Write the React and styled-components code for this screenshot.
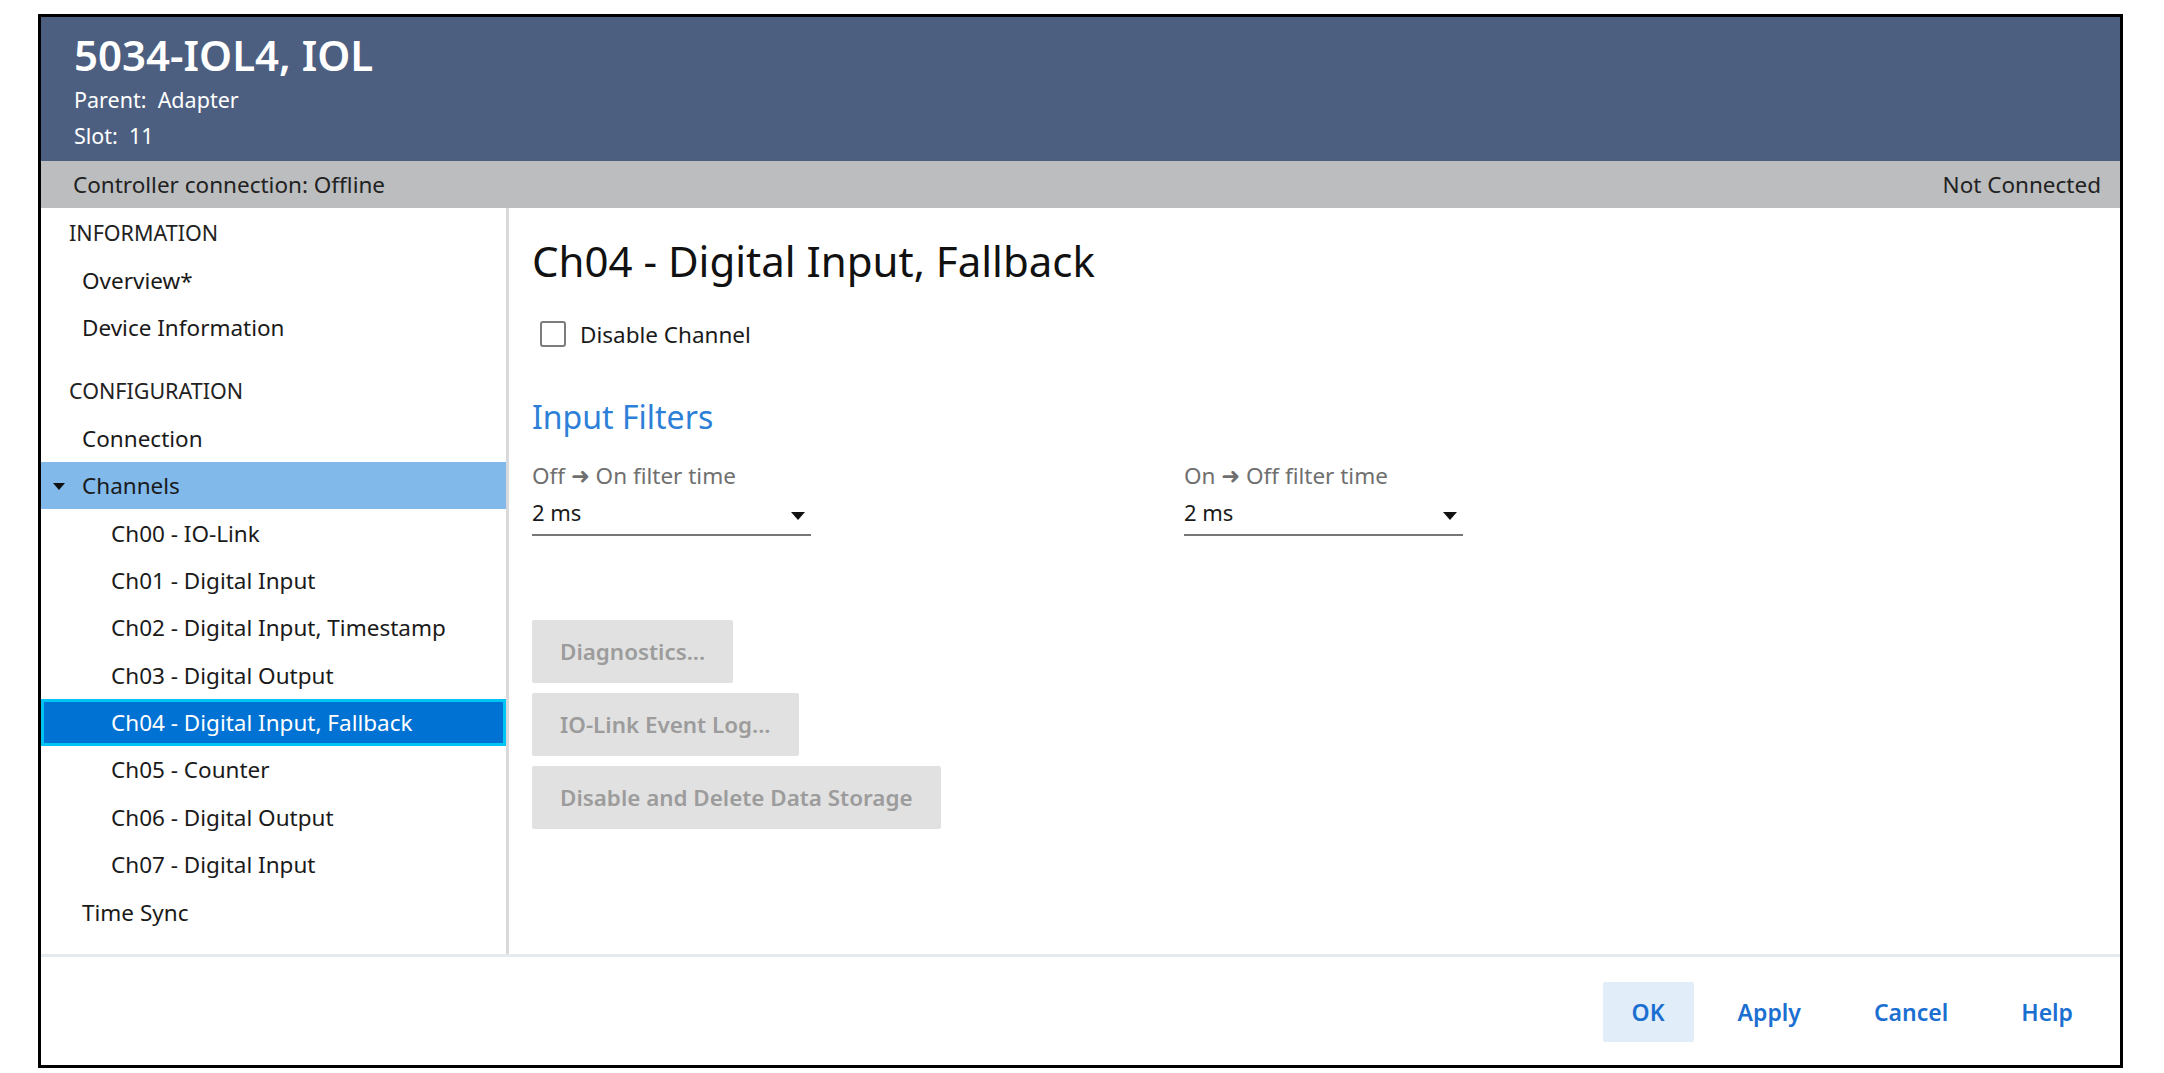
import React from "react";
import styled, { createGlobalStyle } from "styled-components";

const GlobalStyle = createGlobalStyle`
  html, body {
    margin: 0;
    padding: 0;
    background: #ffffff;
  }
  body {
    font-family: "Noto Sans", "DejaVu Sans", sans-serif;
    color: #1c1c1c;
  }
`;

const Page = styled.div`
  padding: 14px 41px 5px 38px;
`;

const Frame = styled.div`
  border: 3px solid #000;
  height: 1048px;
  display: flex;
  flex-direction: column;
`;

const Header = styled.div`
  background: #4d5f80;
  color: #fff;
  padding: 16px 33px 12px;
  height: 144px;
  box-sizing: border-box;
`;

const DeviceTitle = styled.h1`
  margin: 0;
  font-size: 42px;
  line-height: 44px;
  font-weight: 600;
`;

const HeaderLine = styled.div`
  font-size: 21.5px;
  line-height: 26px;
  margin-top: 10px;
`;

const StatusBar = styled.div`
  background: #bcbdbf;
  height: 47px;
  flex: none;
  display: flex;
  align-items: center;
  justify-content: space-between;
  padding: 0 19px 0 32px;
  font-size: 22.5px;
  color: #222;
`;

const Body = styled.div`
  flex: 1;
  display: flex;
  border-bottom: 3px solid #e6e9ee;
  min-height: 0;
`;

const Sidebar = styled.nav`
  width: 465px;
  border-right: 3px solid #d9d9dc;
  padding-top: 1px;
`;

const SectionHead = styled.div`
  height: 47.4px;
  display: flex;
  align-items: center;
  padding-left: 28px;
  font-size: 21.5px;
  color: #222;
  margin-top: ${(p) => (p.$gap ? "16px" : "0")};
`;

const NavItem = styled.div`
  height: 47.4px;
  box-sizing: border-box;
  display: flex;
  align-items: center;
  padding-left: ${(p) =>
    (p.$level === 2 ? 70 : 41) - (p.$selected ? 3 : 0)}px;
  font-size: 22.5px;
  color: ${(p) => (p.$selected ? "#fff" : "#1a1a1a")};
  background: ${(p) =>
    p.$selected ? "#0072d3" : p.$open ? "#80b9ea" : "transparent"};
  border: ${(p) => (p.$selected ? "3px solid #00c4f4" : "none")};
  position: relative;
`;

const Caret = styled.span`
  position: absolute;
  left: 12px;
  top: 50%;
  margin-top: -3px;
  width: 0;
  height: 0;
  border-left: 6px solid transparent;
  border-right: 6px solid transparent;
  border-top: 7px solid #111;
`;

const Main = styled.main`
  flex: 1;
  padding: 31px 0 0 23px;
`;

const PageTitle = styled.h2`
  margin: 0;
  font-size: 42px;
  line-height: 44px;
  font-weight: 400;
  color: #111;
`;

const CheckRow = styled.label`
  display: flex;
  align-items: center;
  gap: 14px;
  height: 30px;
  margin-top: 36px;
  padding-left: 8px;
  font-size: 22.5px;
  color: #1a1a1a;
`;

const Box = styled.span`
  width: 26px;
  height: 26px;
  border: 2px solid #7c7c7c;
  border-radius: 3px;
  box-sizing: border-box;
`;

const GroupTitle = styled.h3`
  margin: 50px 0 0;
  font-size: 32px;
  line-height: 36px;
  font-weight: 400;
  color: #2d7fd8;
`;

const FilterRow = styled.div`
  display: flex;
  gap: 373px;
  margin-top: 28px;
`;

const Field = styled.div`
  width: 279px;
`;

const FieldLabel = styled.div`
  font-size: 22.5px;
  line-height: 26px;
  color: #6f6f6f;
`;

const Select = styled.div`
  margin-top: 10px;
  display: flex;
  align-items: center;
  justify-content: space-between;
  padding: 0 6px 9px 0;
  border-bottom: 2px solid #777;
  font-size: 22px;
  line-height: 26px;
  color: #1a1a1a;
`;

const DropArrow = styled.span`
  width: 0;
  height: 0;
  margin-top: 8px;
  border-left: 7px solid transparent;
  border-right: 7px solid transparent;
  border-top: 8px solid #111;
`;

const ActionList = styled.div`
  display: flex;
  flex-direction: column;
  align-items: flex-start;
  gap: 10px;
  margin-top: 84px;
`;

const ActionButton = styled.button`
  height: 63px;
  padding: 0 28px;
  border: none;
  border-radius: 2px;
  background: #e1e1e1;
  color: #9c9c9c;
  font-family: inherit;
  font-size: 22.4px;
  font-weight: 600;
`;

const Footer = styled.div`
  height: 108px;
  flex: none;
  display: flex;
  justify-content: flex-end;
  align-items: center;
  gap: 15px;
  padding: 2px 18px 0 0;
  box-sizing: border-box;
`;

const FooterButton = styled.button`
  height: 60px;
  padding: 0 29px;
  border: none;
  border-radius: 2px;
  background: ${(p) => (p.$primary ? "#e1edf9" : "transparent")};
  color: #1b6fd1;
  font-family: inherit;
  font-size: 23px;
  font-weight: 600;
`;

const channels = [
  "Ch00 - IO-Link",
  "Ch01 - Digital Input",
  "Ch02 - Digital Input, Timestamp",
  "Ch03 - Digital Output",
  "Ch04 - Digital Input, Fallback",
  "Ch05 - Counter",
  "Ch06 - Digital Output",
  "Ch07 - Digital Input",
];

export default function App() {
  return (
    <Page>
      <GlobalStyle />
      <Frame>
        <Header>
          <DeviceTitle>5034-IOL4, IOL</DeviceTitle>
          <HeaderLine>Parent:&nbsp; Adapter</HeaderLine>
          <HeaderLine>Slot:&nbsp; 11</HeaderLine>
        </Header>
        <StatusBar>
          <span>Controller connection: Offline</span>
          <span>Not Connected</span>
        </StatusBar>
        <Body>
          <Sidebar>
            <SectionHead>INFORMATION</SectionHead>
            <NavItem>Overview*</NavItem>
            <NavItem>Device Information</NavItem>
            <SectionHead $gap>CONFIGURATION</SectionHead>
            <NavItem>Connection</NavItem>
            <NavItem $open>
              <Caret />
              Channels
            </NavItem>
            {channels.map((c) => (
              <NavItem key={c} $level={2} $selected={c.startsWith("Ch04")}>
                {c}
              </NavItem>
            ))}
            <NavItem>Time Sync</NavItem>
          </Sidebar>
          <Main>
            <PageTitle>Ch04 - Digital Input, Fallback</PageTitle>
            <CheckRow>
              <Box />
              Disable Channel
            </CheckRow>
            <GroupTitle>Input Filters</GroupTitle>
            <FilterRow>
              <Field>
                <FieldLabel>Off ➜ On filter time</FieldLabel>
                <Select>
                  <span>2 ms</span>
                  <DropArrow />
                </Select>
              </Field>
              <Field>
                <FieldLabel>On ➜ Off filter time</FieldLabel>
                <Select>
                  <span>2 ms</span>
                  <DropArrow />
                </Select>
              </Field>
            </FilterRow>
            <ActionList>
              <ActionButton disabled>Diagnostics...</ActionButton>
              <ActionButton disabled>IO-Link Event Log...</ActionButton>
              <ActionButton disabled>Disable and Delete Data Storage</ActionButton>
            </ActionList>
          </Main>
        </Body>
        <Footer>
          <FooterButton $primary>OK</FooterButton>
          <FooterButton>Apply</FooterButton>
          <FooterButton>Cancel</FooterButton>
          <FooterButton>Help</FooterButton>
        </Footer>
      </Frame>
    </Page>
  );
}
